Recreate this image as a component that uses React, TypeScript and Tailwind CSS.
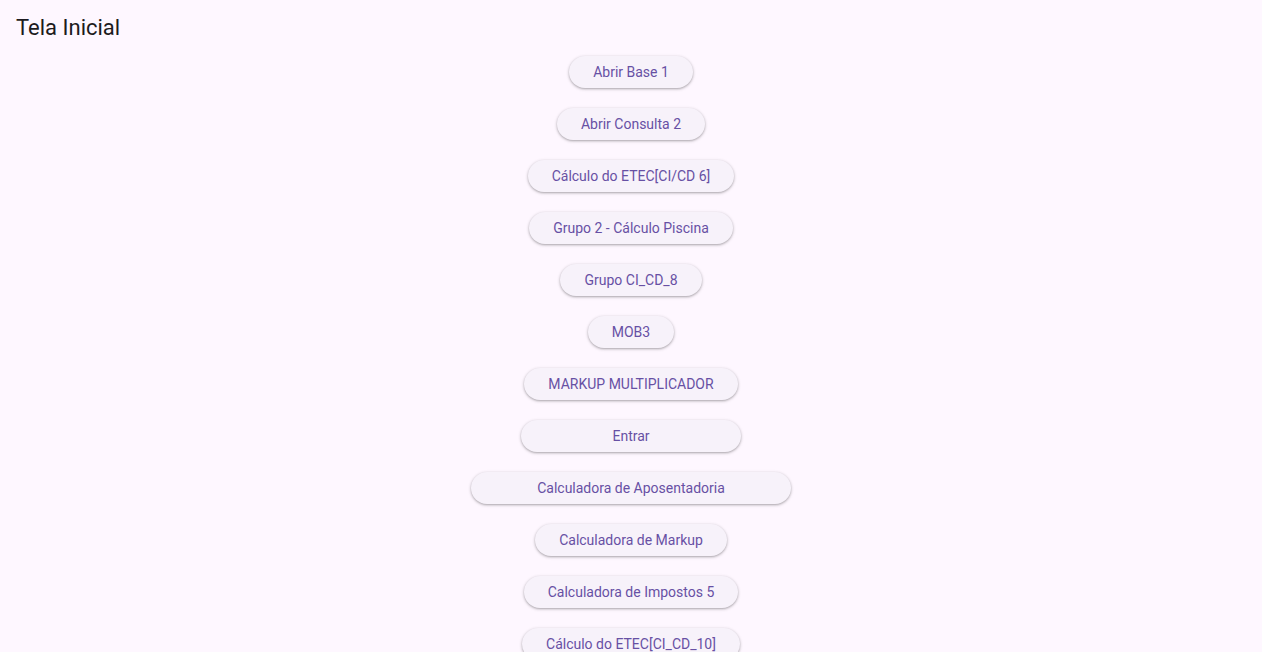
const buttons: { label: string; width?: string }[] = [
  { label: 'Abrir Base 1' },
  { label: 'Abrir Consulta 2' },
  { label: 'Cálculo do ETEC[CI/CD 6]' },
  { label: 'Grupo 2 - Cálculo Piscina' },
  { label: 'Grupo CI_CD_8' },
  { label: 'MOB3' },
  { label: 'MARKUP MULTIPLICADOR' },
  { label: 'Entrar', width: 'w-[220px]' },
  { label: 'Calculadora de Aposentadoria', width: 'w-[320px]' },
  { label: 'Calculadora de Markup' },
  { label: 'Calculadora de Impostos 5' },
  { label: 'Cálculo do ETEC[CI_CD_10]' },
]

export default function App() {
  return (
    <div className="h-screen overflow-hidden bg-[#fef7ff] font-['Roboto',sans-serif]">
      {/* App bar */}
      <header className="h-14 flex items-center px-4">
        <h1 className="text-[22px] text-[#1d1b20] leading-7">Tela Inicial</h1>
      </header>

      {/* Buttons */}
      <main className="flex flex-col items-center gap-5">
        {buttons.map((b) => (
          <button
            key={b.label}
            className={`${b.width ?? ''} h-8 px-6 rounded-full bg-[#f7f2fa] text-[#6750a4] text-sm font-normal tracking-normal shadow-[0_1px_2px_rgba(0,0,0,0.22),0_1px_3px_1px_rgba(0,0,0,0.1)] whitespace-nowrap`}
          >
            {b.label}
          </button>
        ))}
      </main>
    </div>
  )
}
